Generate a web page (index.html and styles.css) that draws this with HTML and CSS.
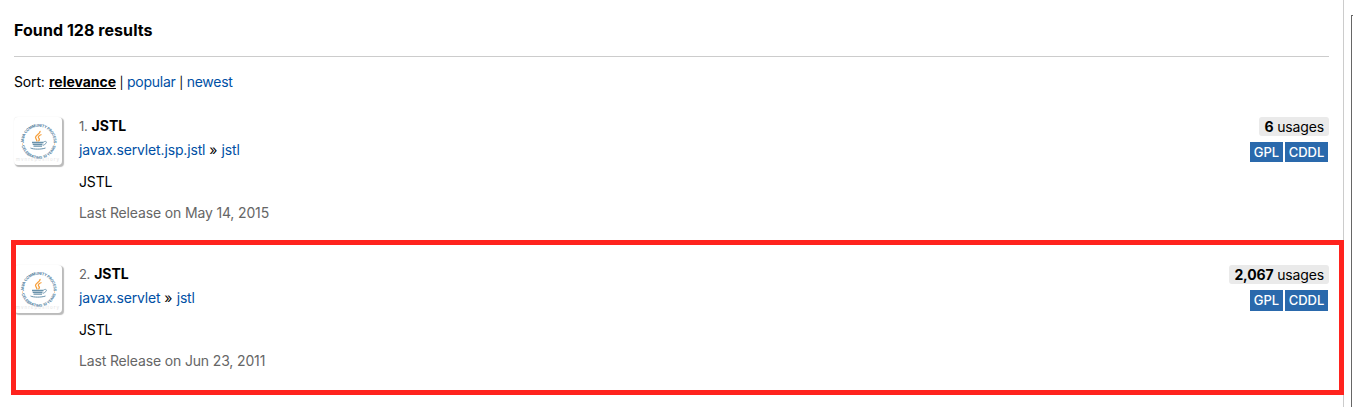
FILE: index.html
```
<!DOCTYPE html>
<html lang="en">
<head>
<meta charset="utf-8">
<title>Search results</title>
<link rel="stylesheet" href="styles.css">
</head>
<body>
<svg class="defs" width="0" height="0" aria-hidden="true">
  <defs>
    <path id="arc-top" d="M9.800 26.500A15 15 0 1 1 39.600 26.500"/>
    <path id="arc-bottom" d="M7.300 27A17.600 17.600 0 0 0 42.100 27"/>
    <symbol id="jcp" viewBox="0 0 48 48">
      <text class="ring"><textPath href="#arc-top" startOffset="50%" text-anchor="middle" textLength="49.500">JAVA COMMUNITY PROCESS</textPath></text>
      <text class="ring"><textPath href="#arc-bottom" startOffset="50%" text-anchor="middle" textLength="46">CELEBRATING 10 YEARS</textPath></text>
      <circle cx="8.500" cy="27" r=".6" fill="#f5a650"/>
      <circle cx="40.500" cy="27" r=".6" fill="#f5a650"/>
      <path d="M26 14c.8 2.700-4.800 4-4.500 6.500 .2 1.500 1.800 2.300 1.300 4M27.500 17.500c-3 1-4 2.500-2.500 4 .8 1 .3 2-.7 2.800" fill="none" stroke="#f6a03d" stroke-width="1.300"/>
      <path d="M18 25.500h11.500M18.700 27.300h9.800M19.500 29.200h8.500" fill="none" stroke="#6992ab" stroke-width="1.300"/>
      <path d="M29.500 25c3.500-2 4.500 1.500-.8 3.500" fill="none" stroke="#6992ab" stroke-width=".9"/>
      <path d="M16.500 31c3 1.500 11 1.500 15 0" fill="none" stroke="#6992ab" stroke-width="1"/>
      <text class="watermark" x="2" y="43.500" textLength="43">mvnrepository</text>
    </symbol>
  </defs>
</svg>
<div class="page">
  <main class="results">
    <h2 class="heading">Found 128 results</h2>
    <p class="sort">Sort: <b>relevance</b><span class="bar">|</span><a>popular</a><span class="bar">|</span><a>newest</a></p>
    <section class="item">
      <svg class="logo"><use href="#jcp"/></svg>
      <div class="info">
        <h3 class="title"><span class="num">1.</span> <b>JSTL</b></h3>
        <p class="path"><a>javax.servlet.jsp.jstl</a> » <a>jstl</a></p>
        <p class="desc">JSTL</p>
        <p class="date">Last Release on May 14, 2015</p>
      </div>
      <div class="meta">
        <div class="usages"><b>6</b> usages</div>
        <div class="licenses"><span class="lic gpl">GPL</span><span class="lic cddl">CDDL</span></div>
      </div>
    </section>
    <section class="item marked">
      <svg class="logo"><use href="#jcp"/></svg>
      <div class="info">
        <h3 class="title"><span class="num">2.</span> <b>JSTL</b></h3>
        <p class="path"><a>javax.servlet</a> » <a>jstl</a></p>
        <p class="desc">JSTL</p>
        <p class="date">Last Release on Jun 23, 2011</p>
      </div>
      <div class="meta">
        <div class="usages"><b>2,067</b> usages</div>
        <div class="licenses"><span class="lic gpl">GPL</span><span class="lic cddl">CDDL</span></div>
      </div>
    </section>
  </main>
  <aside class="side"></aside>
</div>
</body>
</html>
```
FILE: styles.css
```
* { box-sizing: border-box; }
body { margin: 0; background: #fff; color: #000; font: 14px/20px Inter, "Liberation Sans", sans-serif; letter-spacing: -.15px; }
h2, h3, p { margin: 0; font-size: inherit; font-weight: 400; }
a { color: #0050a5; }
b { font-weight: 700; }
.defs { position: absolute; }
.page { display: flex; height: 407px; overflow: hidden; }
.results { flex: none; width: 1344px; height: 407px; padding: 0 15px 0 14px; border-right: 1px solid #ccc; }
.heading { width: 1315px; height: 57px; padding-top: 20px; border-bottom: 1px solid #ccc; font-size: 16px; font-weight: 700; letter-spacing: .06px; }
.sort { height: 60px; padding-top: 15px; }
.sort b { margin-left: .5px; text-decoration: underline; letter-spacing: -.03px; }
.sort a { letter-spacing: -.25px; }
.bar { display: inline-block; width: 11px; font-size: 12px; text-align: center; }
.item { position: relative; display: flex; width: 1315px; height: 148px; }
.marked::after { content: ""; box-sizing: border-box; position: absolute; left: -3px; top: -25px; width: 1333px; height: 155px; border: 5px solid #ff231e; }
.logo { width: 48px; height: 48px; margin-right: 17px; border-radius: 4px; background: #fff; box-shadow: 1.500px 1.500px 1px #bbb, 0 0 1px #ddd; }
.ring { font: 700 3.8px Inter, sans-serif; letter-spacing: 0; fill: #54829f; }
.watermark { font: 4.5px Inter, sans-serif; fill: #e4e4e4; }
.info { flex: 1; margin-top: -1px; }
.title { height: 24px; }
.title b { margin-left: .4px; letter-spacing: 0; }
.num { color: #666; font-size: 13px; letter-spacing: -.35px; }
.path { height: 32px; }
.path a + a { margin-left: .5px; }
.desc { height: 31px; }
.date { color: #666; }
.meta { display: flex; flex-direction: column; align-items: flex-end; }
.usages { height: 19px; padding: 0 5px; line-height: 20px; border-radius: 3px; background: #eaeaea; }
.licenses { display: flex; gap: 2px; margin: 6px 1px 0 0; }
.lic { height: 20px; background: #2a69ac; color: #fff; font-size: 13px; font-weight: 500; line-height: 21px; text-align: center; letter-spacing: -.05px; }
.marked .lic { height: 21px; }
.gpl { width: 33px; }
.cddl { width: 43px; }
.side { width: 20px; flex: none; margin: 15px 0 0 7px; border: solid #666; border-width: 1px 0 0 1px; }
```
